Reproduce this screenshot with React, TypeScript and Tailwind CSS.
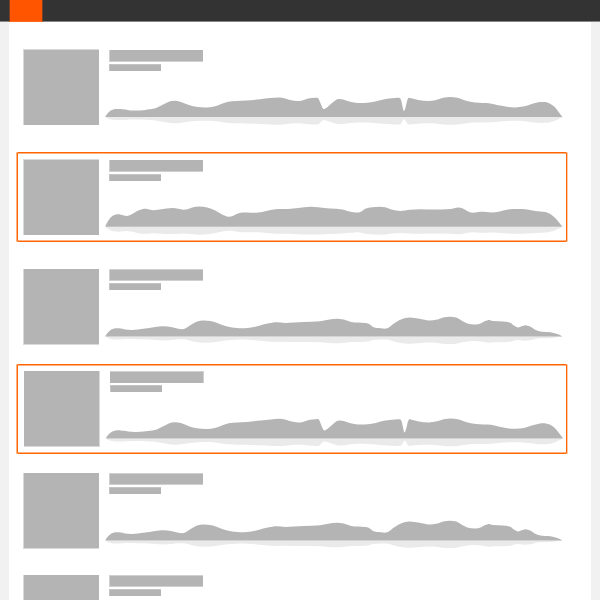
import React from "react";
import clsx from "clsx";

type Point = [number, number];

// Each point is [x, height above the centre line].
const WAVE_A: Point[] = [
  [0, 0], [2, 3.2], [6, 6.7], [10, 7.9], [15, 8], [20, 7.5], [25, 6.6], [30, 6.5], [40, 7.1], [49, 8.4], [57, 12],
  [63, 15], [69, 16.2], [75, 15.3], [83, 12.2], [91, 10.2], [101, 9.5], [109, 10.4], [116, 13], [123, 15.2], [131, 16], [141, 16.5],
  [155, 17.8], [165, 19], [174, 19.6], [180, 18.6], [186, 16.8], [192, 16], [197, 16.5], [203, 18.5], [210, 19.2], [213, 18.8], [215, 14.5],
  [217.5, 8.8], [219, 8], [221.5, 9.3], [226.5, 13.7], [231, 17.3], [233.5, 18], [238, 17.5], [245, 15.2], [252, 14], [262, 14.2],
  [270, 15.5], [278, 17.6], [286, 18.7], [294.5, 19], [296, 16.5], [297.5, 9.5], [298.7, 6], [300.2, 9], [302, 16.5], [303.5, 19.2], [305, 19],
  [313, 17], [323, 16], [330, 16.8], [338, 19.2], [345, 20], [352, 19.2], [360, 16.5], [370, 14.4], [385, 13.6], [395, 11.4], [403, 10],
  [410, 9.6], [418, 10.4], [425, 12.6], [433, 14.7], [440, 15], [444, 13.8], [449, 10.5], [453, 5.6], [457.3, 0],
];

const WAVE_B: Point[] = [
  [0, 0], [1.7, 3.8], [5, 8.8], [8, 11.4], [13, 12.6], [18, 11.6], [22, 10.9], [27, 12.7], [32, 15.7], [37, 17.6], [41, 18], [45, 17.1],
  [49, 16.6], [56, 17.6], [67, 18.7], [73, 18], [78, 17], [82, 17.5], [87, 19.3], [94, 20.2], [102, 19.3], [110, 16.2], [117, 12.3],
  [123, 10.1], [128, 11], [132, 13], [137, 14.2], [145, 14.1], [153, 14.2], [161, 15.9], [170, 17.5], [183, 17.8], [193, 18.8], [205, 20],
  [213, 19.6], [225, 18.2], [237, 17.3], [243, 15.5], [250, 14.3], [254.5, 14.5], [257, 15.9], [260, 18], [265, 19.4], [275, 20.1],
  [280, 19.5], [287, 17.1], [295, 15.9], [305, 17.1], [315, 17.6], [328, 17.2], [345, 17.7], [353, 19.2], [357, 18.5], [363, 15.4],
  [368, 14], [375, 15], [387, 14.3], [393, 15], [403, 17.3], [413, 17.7], [422, 17.3], [430, 15.8], [440, 14.7], [445, 12.7], [450, 8.7], [457.3, 0],
];

const WAVE_C: Point[] = [
  [0, 0], [2.3, 3.4], [5.7, 6.6], [9, 7.8], [14, 8.1], [20, 6.9], [27, 6.4], [38, 7.6], [50, 9.5], [58, 10.2], [67, 9.2], [73, 7.6],
  [77, 7.2], [80, 7.9], [85, 11.2], [92, 15], [98, 16], [105, 15.4], [112, 13.5], [122, 9.9], [132, 8.4], [142, 8.4], [150, 9.6],
  [158, 11.8], [167, 13.7], [172, 14.1], [180, 13.5], [198, 14.4], [215, 15.2], [223, 16.7], [232, 17.6], [237, 17.1], [246, 14.5],
  [260, 13.4], [264, 12.3], [268, 9.3], [273, 8.3], [282, 8.1], [288, 12.3], [294, 16.2], [300, 18.4], [305, 18.9], [313, 17.8],
  [323, 15.9], [332, 16.9], [338, 19], [345, 19.7], [351, 18.8], [357, 15.3], [362, 12.9], [370, 11.9], [376, 13.2], [380, 15.3],
  [384, 16.5], [388, 15.3], [398, 14.8], [405, 13.6], [409, 10.6], [413, 9], [420, 11.1], [425, 9.8], [430, 6.6], [435, 5], [445, 4.2],
  [452, 2.4], [457.3, 0],
];

function contour(points: Point[], base: number, scale: number): string {
  const at = (i: number) => points[Math.max(0, Math.min(points.length - 1, i))];
  const y = (h: number) => (base - h * scale).toFixed(2);
  let d = `M${at(0)[0]} ${y(0)}`;
  for (let i = 0; i < points.length - 1; i++) {
    const [p0, p1, p2, p3] = [at(i - 1), at(i), at(i + 1), at(i + 2)];
    const third = (p2[0] - p1[0]) / 3;
    const s1 = (p2[1] - p0[1]) / (p2[0] - p0[0]);
    const s2 = (p3[1] - p1[1]) / (p3[0] - p1[0]);
    d += `C${(p1[0] + third).toFixed(2)} ${y(p1[1] + s1 * third)} ${(p2[0] - third).toFixed(2)} ${y(p2[1] - s2 * third)} ${p2[0]} ${y(p2[1])}`;
  }
  return d + "Z";
}

function Waveform({ points, base, shift }: { points: Point[]; base: number; shift?: boolean }) {
  return (
    <svg width="460" height="36" viewBox={shift ? "0.2 0 460 36" : "-0.2 0 460 36"} className="block shrink-0">
      <path d={contour(points, base, -0.39)} fill="#eaeaea" />
      <path d={contour(points, base, 1)} fill="#b4b4b4" />
    </svg>
  );
}

interface Track {
  wave: Point[];
  base: number;
  gap: string;
  selected?: boolean;
  cover: string;
  title: string;
  lines: string;
  shift?: boolean;
}

const TRACKS: Track[] = [
  { wave: WAVE_A, base: 25, gap: "mt-5", cover: "border-l border-t", title: "border-b border-l", lines: "mt-px" },
  { wave: WAVE_B, base: 24.8, gap: "mt-5", selected: true, cover: "border-l border-t", title: "border-l border-b", lines: "mt-px" },
  { wave: WAVE_C, base: 24.4, gap: "mt-5", cover: "border-l border-b", title: "border-b border-l border-t", lines: "" },
  { wave: WAVE_A, base: 24.4, gap: "mt-3", selected: true, cover: "border-r border-b", title: "border-t border-r", lines: "", shift: true },
  { wave: WAVE_C, base: 24.4, gap: "mt-3", cover: "border-l border-b", title: "border-b border-l border-t", lines: "" },
  { wave: WAVE_C, base: 24.4, gap: "mt-3", cover: "border-l", title: "border-b border-l border-t", lines: "" },
];

function TrackRow({ track }: { track: Track }) {
  return (
    <div
      className={clsx(
        "ml-2 flex h-[90px] w-[550px] shrink-0 rounded-[1px] border pt-1.5",
        track.gap,
        track.shift ? "pl-1.5" : "pl-[5px]",
        track.selected
          ? "border-[#ff6600] shadow-[-1px_0_0_#ffb27f,1px_0_0_#ffc9a6,inset_0_1px_0_#ffb27f,inset_0_-1px_0_#ffb27f]"
          : "border-transparent",
      )}
    >
      <div className={clsx("size-[76px] shrink-0 border-[#d9d9d9] bg-[#b4b4b4]", track.cover)} />
      <div className="ml-1.5 flex flex-col">
        <div className="flex h-[43px] flex-col pl-1">
          <div className={clsx("h-3 w-[94px] border-[#d0d0d0] bg-[#b4b4b4]", track.title, track.lines)} />
          <div className="mt-0.5 h-[7px] w-[52px] border-t border-l border-[#c4c4c4] bg-[#b4b4b4]" />
        </div>
        <Waveform points={track.wave} base={track.base} shift={track.shift} />
      </div>
    </div>
  );
}

export default function App() {
  return (
    <div className="flex h-[600px] w-[600px] flex-col overflow-hidden bg-[#f1f1f1]">
      <header className="flex h-[22px] shrink-0 border-b border-[#858585] bg-[#333333] pl-[9px]">
        <div className="-mb-px h-[22px] w-[34px] border-x border-b border-x-[#744026] border-b-[#ff6a1f] bg-[#ff5500]" />
      </header>
      <main className="mr-[9px] ml-[9px] flex flex-1 flex-col overflow-hidden bg-white">
        {TRACKS.map((track, i) => (
          <TrackRow key={i} track={track} />
        ))}
      </main>
    </div>
  );
}
